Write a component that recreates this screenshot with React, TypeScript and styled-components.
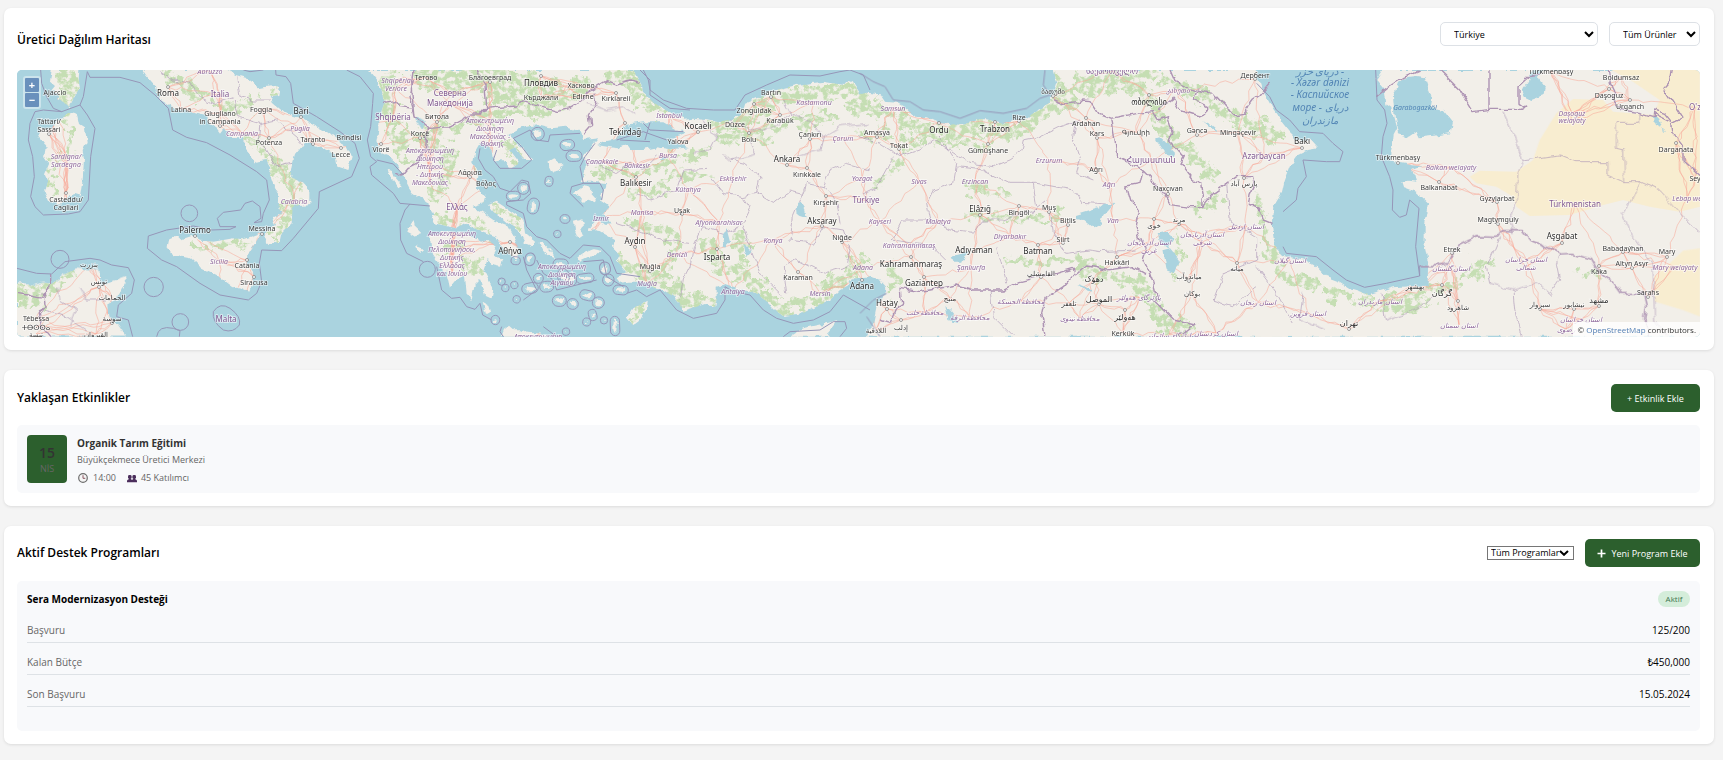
import React from "react";
import styled, { createGlobalStyle } from "styled-components";

const GlobalStyle = createGlobalStyle`
  * { box-sizing: border-box; }
  body {
    margin: 0;
    background: #f4f4f4;
    color: #000;
    font-family: "Open Sans", "Noto Sans", sans-serif;
    font-size: 10px;
  }
  h3, h4, p, dl, dd { margin: 0; }
  button, select { font-family: inherit; }
`;

const Page = styled.main`
  display: flex;
  flex-direction: column;
  gap: 20px;
  padding: 8px 9px 15px 4px;
`;

const Card = styled.section`
  background: #fff;
  border-radius: 7px;
  box-shadow: 0 1px 3px rgba(0, 0, 0, 0.1);
  padding: 13px 14px 13px 13px;
`;

const CardHeader = styled.header<{ $height: number; $gap: number; $align: string }>`
  display: flex;
  justify-content: space-between;
  align-items: ${(p) => p.$align};
  height: ${(p) => p.$height}px;
  margin-bottom: ${(p) => p.$gap}px;
`;

const CardTitle = styled.h3<{ $top?: number }>`
  font-size: 12px;
  line-height: 28px;
  font-weight: 600;
  padding-top: ${(p) => p.$top || 0}px;
`;

const Controls = styled.div`
  display: flex;
  align-items: center;
  gap: 11px;
`;

const FilterSelect = styled.select<{ $width: number }>`
  width: ${(p) => p.$width}px;
  height: 24px;
  margin-top: 1px;
  padding: 0 0 0 9px;
  border: 1px solid #dde1e6;
  border-radius: 5px;
  background: #fff;
  color: #000;
  font-size: 9px;
`;

const ProgramPicker = styled.div`
  position: relative;
  display: flex;
  width: 87px;
  height: 14px;
  svg {
    position: absolute;
    top: 4px;
    right: 5px;
    pointer-events: none;
  }
`;

const ProgramSelect = styled.select`
  appearance: none;
  width: 100%;
  padding: 0 0 0 3px;
  border: 1px solid #767676;
  border-radius: 0;
  background: #fff;
  color: #000;
  font-size: 9px;
  line-height: 12px;
`;

const ActionButton = styled.button<{ $width: number }>`
  display: flex;
  align-items: center;
  justify-content: center;
  gap: 5px;
  width: ${(p) => p.$width}px;
  height: 28px;
  padding: 0;
  border: 0;
  border-radius: 5px;
  background: #2c5f2d;
  color: #fff;
  font-size: 9px;
  white-space: nowrap;
`;

const MapFrame = styled.div`
  position: relative;
  height: 267px;
  border-radius: 5px;
  overflow: hidden;
  background: #aad3df;
`;

const MapSvg = styled.svg`
  display: block;
  width: 100%;
  height: 100%;
  font-family: "Noto Sans", "DejaVu Sans", sans-serif;
`;

const ZoomControls = styled.div`
  position: absolute;
  top: 6px;
  left: 6px;
  display: flex;
  flex-direction: column;
  gap: 1px;
  padding: 2px;
  border-radius: 3px;
  background: rgba(255, 255, 255, 0.4);
`;

const ZoomButton = styled.button`
  width: 14px;
  height: 14px;
  padding: 0;
  border: 0;
  border-radius: 1px;
  background: #6990bc;
  color: #fff;
  font-size: 11px;
  line-height: 14px;
  font-weight: 700;
`;

const Attribution = styled.div`
  position: absolute;
  right: 0;
  bottom: 0;
  padding: 0 4px;
  background: rgba(255, 255, 255, 0.8);
  color: #333;
  font-size: 8px;
  line-height: 15px;
  a { color: #5580b5; text-decoration: none; }
`;

const EventItem = styled.article`
  display: flex;
  align-items: flex-start;
  gap: 10px;
  padding: 10px 10px 7px;
  border-radius: 5px;
  background: #f8f9fb;
`;

const DateBox = styled.time`
  display: flex;
  flex-direction: column;
  align-items: center;
  width: 40px;
  height: 48px;
  padding-top: 9px;
  border-radius: 4px;
  background: #2c5f2d;
`;

const Day = styled.span`
  color: #333;
  font-size: 14px;
  line-height: 18px;
  font-weight: 600;
`;

const Month = styled.span`
  color: #666;
  font-size: 9px;
  line-height: 14px;
`;

const EventTitle = styled.h4`
  color: #333;
  font-size: 10px;
  line-height: 16px;
  font-weight: 700;
`;

const EventPlace = styled.p`
  color: #666;
  font-size: 9px;
  line-height: 18px;
`;

const EventMeta = styled.div`
  display: flex;
  gap: 11px;
  color: #666;
  font-size: 9px;
  line-height: 17px;
`;

const MetaEntry = styled.span`
  display: flex;
  align-items: center;
  gap: 4px;
`;

const Program = styled.article`
  padding: 10px 10px 24px;
  border-radius: 5px;
  background: #f8f9fb;
`;

const ProgramHeader = styled.header`
  display: flex;
  justify-content: space-between;
  height: 20px;
`;

const ProgramTitle = styled.h4`
  font-size: 10px;
  line-height: 16px;
  font-weight: 700;
`;

const Badge = styled.span`
  width: 32px;
  height: 16px;
  border-radius: 8px;
  background: #d4edda;
  color: #3f7550;
  font-size: 8px;
  line-height: 16px;
  text-align: center;
`;

const DetailRow = styled.div`
  display: flex;
  justify-content: space-between;
  height: 32px;
  padding-top: 10px;
  border-bottom: 1px solid #dee2e6;
  font-size: 10px;
  line-height: 18px;
  dt { color: #666; }
`;

/* ---------- map ---------- */

/* Each sheet uses three units per pixel, from its own origin. */
const sheets = {
  W: [0, 0],
  G: [350, 60],
  A: [430, 60],
  C: [860, 60],
  E: [1283, 0],
} as const;
type Sheet = keyof typeof sheets;
const place = (s: Sheet) => `translate(${sheets[s][0]} ${sheets[s][1]}) scale(0.33333)`;

type Shape = [Sheet, string];

const land: Shape[] = [
  ["W", "M155 210L238 210L236 240L240 262L222 290L206 322L190 305L172 298L175 285L155 270L165 258L150 245Z"],
  ["W", "M205 338L222 342L235 350L240 375L255 385L260 425L248 450L252 480L248 540L240 590L222 585L205 590L180 618L160 598L145 605L134 580L145 540L135 520L148 490L135 470L140 440L118 410L120 385L150 390L165 370Z"],
  ["W", "M428 210L440 228L455 245L470 262L482 300L530 330L552 328L580 338L625 350L632 372L650 385L660 398L670 385L690 400L678 410L720 412L735 430L735 450L765 485L800 480L812 500L808 520L822 560L840 585L835 625L845 640L815 655L825 675L795 700L798 728L835 730L840 705L875 670L878 620L900 615L928 612L928 570L905 545L870 530L875 500L885 465L905 440L915 425L935 430L960 440L1005 460L1012 500L1042 510L1055 470L1040 440L980 395L905 355L855 340L815 305L810 288L838 285L842 262L815 255L780 262L745 235L710 225L683 210Z"],
  ["W", "M503 740L508 715L532 705L545 718L575 708L600 722L640 725L700 715L725 718L745 712L784 697L768 725L742 765L740 790L765 830L748 875L720 862L700 865L680 850L650 825L600 800L570 772L550 768L515 765Z"],
  ["W", "M51 850L80 850L100 855L130 848L155 852L190 825L225 808L265 812L280 805L300 815L300 850L325 850L350 838L375 828L378 845L350 890L322 915L325 950L355 975L378 1010L51 1010Z"],
  ["G", "M58 30L82 60L95 90L102 130L88 180L88 210L82 245L95 280L120 290L140 310L165 355L180 385L190 400L215 418L235 425L240 450L255 490L320 505L345 488L360 500L400 515L440 530L455 560L500 600L510 575L490 530L470 495L430 480L395 455L365 440L400 430L405 410L380 380L385 345L370 310L375 280L395 245L425 270L430 305L460 300L480 325L510 310L480 270L495 262L525 300L550 300L520 265L500 250L475 225L510 205L560 195L600 205L650 200L690 215L700 240L745 235L720 265L735 262L760 245L800 237L825 195L880 187L940 187L990 215L1000 170L940 148L915 130L880 100L872 70L850 30Z"],
  ["G", "M240 530L270 515L300 515L350 520L390 545L415 540L440 560L430 580L455 600L450 620L425 615L410 600L400 630L430 690L425 715L405 705L390 660L370 680L362 720L350 700L345 650L320 660L300 685L290 640L265 610L245 580Z"],
  ["G", "M415 435L440 425L470 445L500 465L520 480L525 520L555 545L550 560L525 550L505 510L470 490L430 455Z"],
  ["G", "M110 330L125 332L130 345L155 375L145 382L130 360L118 350Z"],
  ["G", "M180 495L190 480L195 500L210 515L198 530L185 522L172 515Z"],
  ["G", "M195 555L210 560L222 572L208 580Z"],
  ["G", "M592 308L610 298L625 310L640 310L630 330L605 335Z"],
  ["G", "M665 402L685 390L705 376L722 390L742 412L735 430L715 422L700 425L690 412Z"],
  ["G", "M672 482L700 475L705 490L690 505L698 525L685 535L675 510Z"],
  ["G", "M567 545L580 548L605 575L612 592L595 585L580 570Z"],
  ["G", "M685 590L700 580L730 568L755 572L740 588L715 590L690 602Z"],
  ["G", "M832 775L850 745L890 722L888 750L870 780L850 795Z"],
  ["G", "M455 830L462 812L480 797L492 808L515 808L530 818L590 822L600 830Z"],
  ["G", "M398 728L415 738L420 755L408 762Z"],
  ["A", "M752 180L790 176L830 180L860 186L905 178L935 165L945 130L980 115L1040 90L1100 75L1180 65L1240 75L1265 60L1290 100L1330 115L1330 650L1290 655L1265 655L1250 680L1230 690L1200 720L1170 735L1120 760L1060 768L1035 750L1010 725L980 700L940 690L885 672L860 680L860 715L855 740L825 732L800 740L760 752L745 730L730 710L700 690L680 690L650 665L600 665L570 668L560 655L590 635L560 600L568 585L545 560L555 540L520 520L500 508L475 510L490 490L500 480L525 492L545 490L520 460L540 440L510 420L525 390L530 370L490 365L455 365L470 320L460 290L475 270L500 255L560 265L590 255L600 270L640 270L680 262L720 268L780 262L740 250L720 235L770 218L745 200Z"],
  ["A", "M1080 830L1120 805L1190 790L1225 780L1190 820L1200 830Z"],
  ["C", "M-10 105L20 98L60 103L75 125L110 128L140 145L165 170L200 172L240 190L310 195L350 178L380 178L420 190L490 180L520 160L550 145L580 110L592 70L580 30L1190 30L1200 75L1330 75L1330 830L20 830L40 790L50 740L80 700L78 680L60 660L35 650L-10 655Z"],
  ["E", "M-80 210H1260V1010H-80Z"],
];

const islands: [Sheet, number, number, number, number][] = [
  ["G", 563, 222, 11, 11], ["G", 652, 255, 13, 7], ["G", 672, 288, 15, 7], ["G", 597, 364, 3, 6],
  ["G", 550, 438, 8, 15], ["G", 520, 385, 8, 9], ["G", 490, 408, 12, 5], ["G", 645, 477, 6, 4],
  ["G", 540, 598, 6, 10], ["G", 540, 685, 16, 7], ["G", 590, 680, 12, 7], ["G", 632, 612, 14, 6],
  ["G", 655, 660, 16, 7], ["G", 640, 648, 9, 12], ["G", 705, 655, 18, 5], ["G", 628, 722, 12, 8],
  ["G", 668, 732, 8, 7], ["G", 712, 706, 14, 6], ["G", 745, 728, 9, 8], ["G", 795, 798, 5, 20],
  ["G", 812, 690, 14, 5], ["G", 775, 660, 8, 9], ["G", 765, 625, 7, 10], ["G", 565, 655, 6, 6],
  ["G", 455, 665, 2, 2], ["G", 466, 684, 2, 2], ["G", 493, 675, 2, 2], ["G", 622, 522, 2, 2],
  ["G", 762, 781, 2, 2], ["G", 710, 786, 3, 3], ["G", 728, 765, 3, 8], ["G", 648, 815, 2, 2],
  ["G", 436, 780, 4, 5], ["G", 497, 602, 5, 3], ["G", 500, 718, 2, 2],
];

/* Lone rocks: the limit around them is a wide circle. */
const rocks: [Sheet, number, number, number][] = [
  ["W", 180, 778, 27], ["W", 568, 640, 25], ["W", 461, 861, 29], ["W", 541, 966, 25], ["G", 232, 628, 24],
];

const water: Shape[] = [
  ["E", "M-82 210L-69 255L-29 330L1 372L20 395L45 420L85 422L105 445L75 450L45 465L20 500L5 540L-4 580L-29 620L-34 670L-24 740L0 768L60 778L95 795L130 830L170 845L200 865L260 882L330 862L400 858L437 857L438 800L425 740L425 680L438 610L400 575L360 560L355 545L375 542L400 545L390 510L415 500L355 490L328 485L322 460L330 430L332 400L340 385L330 350L325 320L310 310L305 270L280 240L300 210Z"],
  ["E", "M330 290L345 245L370 232L400 228L425 232L445 290L440 320L480 330L508 365L500 400L470 405L410 412L402 395L380 410L345 400L335 350Z"],
  ["E", "M745 210L735 240L715 265L725 290L745 300L785 285L788 260L765 230L780 210Z"],
  ["C", "M648 465L690 452L715 445L735 428L760 432L730 465L722 495L700 505L670 480L648 478Z"],
  ["C", "M885 238L905 235L945 275L942 288L915 280Z"],
  ["C", "M893 520L925 512L940 540L925 565L900 545Z"],
  ["C", "M910 570L930 565L960 600L945 640L920 630Z"],
  ["C", "M1025 180L1050 192L1078 215L1055 205Z"],
  ["C", "M272 590L310 580L330 575L300 605L278 605Z"],
  ["C", "M256 735L270 750L290 775L298 790L265 780Z"],
  ["C", "M655 672L690 685L700 695L680 692Z"],
  ["A", "M1098 440L1115 420L1125 450L1130 475L1100 465Z"],
  ["A", "M878 525L890 508L900 545L885 560Z"],
  ["A", "M940 550L965 575L950 592Z"],
  ["A", "M690 295L705 290L710 298L695 300Z"],
  ["G", "M195 170L225 188L222 205L200 190Z"],
  ["E", "M1112 350L1125 352L1135 380L1122 375ZM1140 380L1148 395L1142 400Z"],
];

const deserts: Shape[] = [
  ["E", "M985 210H1251V620L1190 635L1100 620L1020 600L960 615L860 645L740 648L700 620L690 590L640 560L580 550L560 530L590 512L700 515L750 480L770 420L820 340L870 297L960 300L990 335L1110 345L1130 300L1050 245Z"],
  ["E", "M1115 830L1160 790L1200 752L1251 745V950L1200 930L1115 905Z"],
];

/* Woodland belts, as broad lines: sheet, path, width. */
const woods: [Sheet, string, number][] = [
  ["W", "M195 215L205 250L200 295", 50], ["W", "M160 580L150 500L215 440L200 360", 12], ["W", "M500 215L560 265L620 300L700 330L760 300", 22],
  ["W", "M760 420L820 480L835 520L880 560", 30], ["W", "M890 570L870 640L825 710", 28], ["W", "M590 745L680 730L745 725", 14],
  ["W", "M55 890L110 880L150 850L215 825", 34], ["W", "M60 905L120 900", 26], ["W", "M820 275L835 272", 18],
  ["G", "M120 40L110 140L140 230L170 300", 34], ["G", "M230 50L330 60L420 50L520 70L640 110", 58], ["G", "M420 100L500 120L630 120L690 70", 34],
  ["G", "M210 230L290 270L300 340L250 400", 32], ["G", "M230 210L320 200L440 160L590 160", 26], ["G", "M800 40L880 60L900 130", 50],
  ["G", "M430 440L500 490", 18], ["G", "M290 560L340 590L380 630", 24], ["G", "M270 470L340 480L420 520", 18], ["G", "M470 250L490 300", 18],
  ["G", "M385 300L400 380", 14], ["G", "M840 780L880 745", 14],
  ["A", "M560 50L620 60L640 110L700 150", 36], ["A", "M840 190L920 195L960 160L1060 110L1160 100L1260 85L1310 120", 38], ["A", "M880 240L1000 220L1090 180L1200 170", 24],
  ["A", "M490 330L560 330L640 340L720 300L830 280", 24], ["A", "M600 400L680 400L740 340L840 350", 16], ["A", "M600 500L700 500L740 560L700 640", 22],
  ["A", "M560 600L640 650L720 680L770 735L850 720", 30], ["A", "M830 550L860 620L940 640L1000 700L1060 750L1160 720L1240 650L1300 590", 30], ["A", "M930 530L940 600", 26],
  ["C", "M-10 140L60 160L170 200L240 215L340 205L430 215L500 195L560 140L630 120", 38], ["C", "M0 210L80 240L200 240L380 260", 16], ["C", "M590 80L700 80L800 70L860 50", 36],
  ["C", "M640 60L780 50L850 90L900 160L910 220", 24], ["C", "M920 60L1000 90L1060 130L1140 180L1250 230", 34], ["C", "M940 230L1000 290L1050 340", 30],
  ["C", "M1030 440L1080 420", 26], ["C", "M1195 420L1215 500L1240 600L1290 650L1320 660", 24], ["C", "M340 380L430 400", 24], ["C", "M100 690L95 640", 24],
  ["C", "M20 600L-10 620", 28], ["C", "M330 460L480 480L600 470", 16], ["C", "M440 600L540 610L650 590L700 620", 16],
  ["C", "M680 630L760 650L850 680L880 740L920 800L990 800", 32], ["C", "M40 380L70 360L150 270", 14], ["C", "M940 530L960 580L940 640", 12],
  ["E", "M0 835L60 840L120 870L200 895L290 915L360 905L430 880L520 850L605 790", 24], ["E", "M310 910L380 920", 42], ["E", "M890 820L940 835", 14],
];

/* Country frontiers. */
const frontiers: Shape[] = [
  ["G", "M102 130L135 125L150 140L190 145L195 170L185 60L190 30"],
  ["G", "M190 145L180 110L190 60M195 170L225 195L235 205L300 200L365 165L392 165L395 150L410 145L405 75L380 30"],
  ["G", "M235 205L230 260L210 280L205 310L175 325L155 348L135 335"],
  ["G", "M395 146L500 138L520 125L620 155L660 145L700 120L715 95L770 62L800 72L840 60L872 68"],
  ["G", "M735 95L740 130L718 165L722 195L700 220"],
  ["C", "M580 120L610 132L660 128L665 120L690 122L715 160L755 175L830 160L880 155L895 180L920 170L935 220L925 240L970 290L960 310L1000 360L1025 370L1030 410L1028 440L990 440L930 430L910 400L870 350L850 330L835 320L770 290L765 240L755 175"],
  ["C", "M895 150L940 115L960 150L1020 168L1040 160L1040 140L1000 120L1010 95L945 65L930 30"],
  ["C", "M1010 90L1060 100L1120 165L1150 160L1180 120L1195 110L1230 70"],
  ["C", "M850 330L840 370L800 378L815 430L835 460L825 500L840 540L860 570L850 600L870 640L885 690L890 730L920 760L940 780L1005 795L960 830"],
  ["C", "M1028 440L1060 400L1130 350L1180 350L1185 370L1170 400L1165 435L1200 450L1210 480L1235 490"],
  ["C", "M855 640L820 620L740 630L680 618L645 645L640 625L590 640L540 650L480 665L430 690L340 690L290 675L210 690L180 695L120 685L125 730L110 740L90 790L60 780"],
  ["C", "M645 640L610 680L555 715L545 760L555 830"],
  ["E", "M470 210L530 270L570 335L618 328H715L725 322L708 310V260L740 230L770 225"],
  ["E", "M618 210V328M980 210L985 250L995 270L990 300L1015 330L1070 338L1110 350L1115 330L1145 340L1165 365L1170 400L1200 440L1200 480L1250 525"],
  ["E", "M410 797H450L495 790L510 765L530 735L580 710L640 712L655 692L720 692L745 722L800 745L830 762L870 760L925 778L940 805L990 845L1015 880L1080 880L1090 920L1085 960L1100 1010"],
  ["E", "M280 290L320 258L360 232L410 210"],
  ["E", "M1165 210L1160 240L1140 262L1200 355L1170 370L1110 340"],
  ["W", "M155 822L155 852L130 880L135 915L115 940L125 980L150 1010"],
  ["W", "M51 880L80 885L130 895"],
];

/* Inner province limits. */
const provinces: Shape[] = [
  ["W", "M520 240L570 250L600 290L640 310L700 290M710 230L720 290L760 300L810 300M700 300L710 350L780 370L830 360L890 410L905 440M780 370L775 420L800 450L830 500L870 490M480 215L530 250"],
  ["W", "M175 860L180 900L230 930L210 980M240 860L260 900L330 900M130 930L200 950L260 990"],
  ["A", "M470 130L530 150L580 140L610 160M820 180L860 230L840 270L790 280M900 180L960 210L1040 200L1080 160L1060 120M960 240L980 280L900 300L880 280M1080 160L1150 190L1180 230L1170 270L1100 290M1180 230L1230 200L1320 190"],
  ["A", "M470 300L560 340L600 310L640 330L680 290M620 400L660 420L740 390L760 330L830 325M840 350L880 400L940 410L980 400L990 350L940 310L900 300M940 410L960 440L930 500L880 520L820 500L790 560L780 620L760 660L750 720"],
  ["A", "M560 490L620 510L700 540L780 550M980 400L1030 430L1080 390L1120 400L1130 370L1180 380L1200 330L1250 310L1320 330M1120 400L1090 470L1080 540L1150 550L1180 500L1240 510L1260 570L1250 620L1180 640L1100 600L1060 620L1070 700M1180 380L1220 420L1230 490M940 500L960 560L990 640L1060 710"],
  ["C", "M0 230L60 250L120 290L180 270L220 240L270 270L330 310L400 320L450 300L480 280L490 240L540 230L600 200L660 180M240 230L290 310L280 370L220 390L200 430L210 480L270 510L340 520L370 480L430 480L520 450L560 420M650 180L640 240L660 300L650 340L700 360"],
  ["C", "M290 320L370 330L450 370L530 370L640 390L670 430L740 435M520 370L530 440L500 480M570 450L580 520L620 580L690 570L720 575L830 570M100 290L50 380L10 400M200 480L130 480L100 540L220 560L260 600M410 560L440 670M390 690L400 770L460 830M1100 370L1110 480L1190 530L1190 600L1090 640L1060 720L1120 740L1190 680M1190 620L1250 700L1300 790"],
  ["E", "M660 335L690 400L720 480L705 520L700 600L680 660L690 700M720 480L830 465L880 485H975V525L1020 545H1070L1130 570L1200 650L1250 700M1000 370H1070V340M1000 370V445L1022 450L1025 545M1070 545L1045 600L1020 640L1050 710L1110 800L1115 960L1150 1010"],
  ["E", "M650 712L625 770L610 800L620 850L690 870L760 850L800 885L830 840L820 790L830 762M690 870L695 930L715 1010M300 880L310 960L420 920L450 890M60 880L50 960L130 990"],
];

/* Limits of the territorial waters. */
const seaLimits: Shape[] = [
  ["W", "M122 210L125 250L140 290L160 325L185 335L240 315L262 345L285 385L272 470L265 600L240 635L205 642L130 645L105 620L92 590L103 530L98 470L85 420L90 370L105 335L130 330L185 335M240 315L250 290L262 215L270 232H360L420 248L465 285L505 325L518 390L560 412L620 428L690 465L770 515L800 540L808 600L790 640L785 665L762 668L783 655L780 620L757 603L735 610L722 630L670 637L652 655L660 680L708 680L690 688L635 690L580 678L500 690L445 708L442 745L485 780L530 800L600 850L660 885L745 900L770 880L785 845L778 790L785 750L845 752L880 715L955 625L958 575L1055 530L1078 475L1065 430L1020 395L950 350L880 310L872 250L858 230L828 225L827 210"],
  ["W", "M51 805L110 820L155 822L195 785L270 775L300 780L335 795L385 803L403 840L395 880L355 915L350 950L385 960L398 1010M470 1010Q475 975 520 985L540 992L538 1010M730 210L750 215L790 210M640 935Q660 905 690 925Q725 950 718 975Q700 1000 670 990Q635 965 640 935"],
  ["G", "M-10 30L30 50L70 100L68 130L62 200L52 240L62 290L80 305L60 320L65 345L130 400L150 430L240 438M80 300L130 312L160 345M180 432L165 450L150 490L152 540L170 580L220 605M260 620L275 690L305 715L330 712L350 740L375 748L390 730L398 765L425 780M455 800L450 815L460 830M580 800L620 830"],
  ["G", "M390 265L385 295L405 330L430 350L450 385L480 395L515 360L535 365L542 400L520 420L470 425L470 435L520 460L530 500L560 530L590 540L630 580L660 595L700 555L750 560L780 590L800 640L870 650M440 270L430 300L450 325L515 325L545 300L515 260L490 235L540 210L560 240L595 245L600 225L690 220M735 250L705 290L690 320L700 370L750 370L760 390L755 420M660 400L665 380L700 370M700 440L660 400M520 590L530 630L560 690L520 720M560 600L580 640L610 660L620 690L740 660M700 605L760 600L770 650L820 680"],
  ["G", "M925 0L870 30L900 60L900 105L960 145L1020 150M900 188L885 240M810 240L900 245"],
  ["A", "M640 30L655 60L660 90L700 120L770 145L850 150L915 150L945 105L1010 75L1080 45L1170 48L1230 35L1260 30L1300 45L1320 90M640 190L660 210L760 215M560 240L640 215L710 240"],
  ["A", "M590 700L620 690L650 710L690 690L740 750L790 775L860 760L885 720L885 680L910 695L960 705L1000 750L1040 775L1090 790L1150 780L1200 755L1240 705L1320 750M1060 830L1080 815L1170 810L1210 785L1245 785L1250 805L1230 830"],
  ["C", "M0 40L40 65L75 80L100 120L150 125L190 150L240 155L300 175L360 152L430 160L500 145L540 115L570 105L550 75L555 30M0 760L40 720L80 700M60 830L40 800L20 770"],
  ["E", "M-79 250L-40 290L-20 330L20 360L50 395L120 400L150 430L180 455L170 485L130 485L60 480L70 530L45 565L40 600L0 635M0 740L10 760L100 770L150 810L190 840L245 862L310 850L410 828L398 740L408 625L380 600L370 645L350 652L328 630L330 570L320 530L295 470L300 410L312 370L305 330L282 300L278 210M410 797V828"],
];

type Kind = "small" | "city" | "region" | "country" | "sea" | "gulf";
/* text, sheet, centre x, centre y, kind, offset of the town's dot */
type Label = [string, Sheet, number, number, Kind, number?];
const labels: Label[] = [
  ["Ajaccio", "W", 164, 276, "small"], ["Tàttari/", "W", 147, 362, "small"], ["Sassari", "W", 148, 386, "small", 16],
  ["Sardigna/", "W", 198, 468, "region"], ["Sardegna", "W", 198, 492, "region"], ["Casteddu/", "W", 198, 597, "small", -17], ["Cagliari", "W", 199, 621, "small"],
  ["Roma", "W", 505, 280, "city", -20], ["Latina", "W", 544, 326, "small"], ["Italia", "W", 660, 283, "country"], ["Abruzzo", "W", 630, 213, "region"],
  ["Giugliano", "W", 661, 338, "small"], ["in Campania", "W", 661, 362, "small", 16], ["Foggia", "W", 784, 328, "small"], ["Bari", "W", 904, 334, "city", 18],
  ["Puglia", "W", 900, 383, "region"], ["Campania", "W", 727, 398, "region"], ["Potenza", "W", 807, 427, "small", -14], ["Taranto", "W", 938, 416, "small", 16],
  ["Brindisi", "W", 1046, 412, "small"], ["Lecce", "W", 1023, 461, "small", -16], ["Calabria", "W", 882, 602, "region"], ["Messina", "W", 785, 685, "small", 16],
  ["Palermo", "W", 584, 691, "city", 17], ["Sicilia", "W", 656, 783, "region"], ["Catania", "W", 742, 796, "small", -17], ["Siracusa", "W", 761, 846, "small", -16],
  ["Malta", "W", 679, 958, "country"], ["بنزرت", "W", 268, 793, "small"], ["تونس", "W", 297, 842, "small", 18], ["الحمامات", "W", 336, 890, "small"],
  ["سوسة", "W", 337, 954, "small", 16], ["Tébessa", "W", 108, 954, "small"], ["ⵜⴱⵙⵙⴰ", "W", 108, 980, "small"], ["تبسة", "W", 108, 1003, "small"], ["القيروان", "W", 288, 1003, "small"],
  ["Shqipëria", "G", 138, 60, "region"], ["Veriore", "G", 138, 84, "region"], ["Тетово", "G", 228, 50, "small"], ["Северна", "G", 299, 99, "country"], ["Македонија", "G", 299, 129, "country"],
  ["Shqipëria", "G", 129, 170, "country"], ["Битола", "G", 261, 169, "small", 16], ["Korçë", "G", 211, 219, "small", 16], ["Vlorë", "G", 93, 268, "small", -16],
  ["Αποκεντρωμένη", "G", 241, 269, "region"], ["Διοίκηση", "G", 241, 293, "region"], ["Ηπείρου", "G", 241, 317, "region"], ["- Δυτικής", "G", 241, 341, "region"], ["Μακεδονίας", "G", 241, 365, "region"],
  ["Благоевград", "G", 421, 50, "small", 16], ["Пловдив", "G", 572, 68, "city", -20], ["Хасково", "G", 692, 74, "small"], ["Кърджали", "G", 572, 110, "small"], ["Edirne", "G", 698, 107, "small"],
  ["Kırklareli", "G", 797, 114, "small", -16], ["Αποκεντρωμένη", "G", 420, 179, "region"], ["Διοίκηση", "G", 420, 203, "region"], ["Μακεδονίας -", "G", 420, 227, "region"], ["Θράκης", "G", 425, 250, "region"],
  ["Λάρισα", "G", 359, 336, "small", 14], ["Βόλος", "G", 407, 368, "small", 14], ["Ελλάς", "G", 320, 441, "country"], ["Αθήνα", "G", 480, 573, "city", -28],
  ["Αποκεντρωμένη", "G", 306, 520, "region"], ["Διοίκηση", "G", 306, 544, "region"], ["Πελοποννήσου,", "G", 306, 568, "region"], ["Δυτικής", "G", 306, 592, "region"], ["Ελλάδας", "G", 306, 615, "region"], ["και Ιονίου", "G", 306, 639, "region"],
  ["Αποκεντρωμένη", "G", 636, 617, "region"], ["Διοίκηση", "G", 636, 641, "region"], ["Αιγαίου", "G", 636, 665, "region"], ["Αποκεντρωμένη", "G", 563, 828, "region"],
  ["Tekirdağ", "A", 584, 216, "city", -26], ["İstanbul", "A", 716, 164, "region"], ["Kocaeli", "A", 805, 199, "city", 17], ["Yalova", "A", 743, 244, "small"], ["Bursa", "A", 714, 286, "region"],
  ["Çanakkale", "A", 517, 302, "region"], ["Balıkesir", "A", 620, 316, "region"], ["Balıkesir", "A", 618, 368, "city", -17], ["Düzce", "A", 916, 192, "small"], ["Bolu", "A", 957, 236, "small", -16],
  ["Zonguldak", "A", 973, 149, "small", -16], ["Bartın", "A", 1023, 96, "small", 14], ["Karabük", "A", 1049, 180, "small", -14], ["Kastamonu", "A", 1153, 126, "region"], ["Çankırı", "A", 1141, 221, "small", 16],
  ["Çorum", "A", 1240, 234, "region"], ["Ankara", "A", 1070, 298, "city", 18], ["Kırıkkale", "A", 1130, 341, "small", -16], ["Eskişehir", "A", 908, 355, "region"], ["Kütahya", "A", 774, 388, "region"],
  ["Manisa", "A", 637, 456, "region"], ["Uşak", "A", 756, 449, "small", 12], ["İzmir", "A", 514, 474, "region"], ["Afyonkarahisar", "A", 868, 485, "region"], ["Yozgat", "A", 1297, 353, "region"],
  ["Kırşehir", "A", 1189, 425, "small", -16], ["Türkiye", "A", 1308, 421, "country"], ["Aksaray", "A", 1177, 482, "city", 15], ["Niğde", "A", 1236, 531, "small", 14], ["Konya", "A", 1029, 539, "region"],
  ["Aydın", "A", 614, 542, "city", 18], ["Denizli", "A", 742, 581, "region"], ["Muğla", "A", 661, 618, "small", 14], ["Isparta", "A", 860, 590, "city", -22], ["Muğla", "A", 651, 669, "region"],
  ["Karaman", "A", 1103, 652, "small", -16], ["Antalya", "A", 908, 694, "region"], ["Mersin", "A", 1169, 700, "region"], ["Adana", "A", 1300, 620, "region"], ["Adana", "A", 1295, 679, "city", -20],
  ["Samsun", "C", 98, 143, "region"], ["Amasya", "C", 52, 215, "small", 15], ["Tokat", "C", 117, 254, "small", 14], ["Ordu", "C", 238, 210, "city", -20], ["Trabzon", "C", 406, 207, "city", -20], ["Rize", "C", 478, 170, "small", 14],
  ["Gümüşhane", "C", 384, 269, "small", -16], ["Erzurum", "C", 567, 300, "region"], ["Erzincan", "C", 345, 362, "region"], ["Sivas", "C", 177, 363, "region"], ["Elâzığ", "C", 360, 446, "city", 18],
  ["Bingöl", "C", 476, 455, "small", -16], ["Muş", "C", 567, 442, "small", 15], ["Bitlis", "C", 623, 481, "small", 14], ["Malatya", "C", 235, 483, "region"], ["Kayseri", "C", 59, 484, "region"],
  ["Kahramanmaraş", "C", 148, 554, "region"], ["Adıyaman", "C", 341, 571, "city"], ["Diyarbakır", "C", 450, 529, "region"], ["Batman", "C", 534, 574, "city", -20], ["Siirt", "C", 608, 536, "small", 14], ["Van", "C", 759, 479, "region"],
  ["Kahramanmaraş", "C", 152, 611, "city", -20], ["Şanlıurfa", "C", 332, 620, "region"], ["Gaziantep", "C", 193, 670, "city", -20], ["Hatay", "C", 81, 730, "city", 17], ["Hakkâri", "C", 772, 607, "small", -16],
  ["Ağrı", "C", 708, 326, "small"], ["Ağrı", "C", 747, 373, "region"], ["Kars", "C", 712, 220, "small", 14], ["Ardahan", "C", 677, 190, "small", -16], ["ბათუმი", "C", 580, 94, "small", 14],
  ["საქართველო", "C", 755, 33, "country"], ["თბილისი", "C", 868, 126, "city", -22], ["კახეთი", "C", 953, 89, "region"], ["Գյումրի", "C", 827, 215, "small"], ["Հայաստան", "C", 872, 301, "country"],
  ["Naxçıvan", "C", 924, 385, "small", 16], ["Gəncə", "C", 1010, 211, "small", 14], ["Mingəçevir", "C", 1133, 217, "small"], ["Azərbaycan", "C", 1211, 288, "country"], ["Дербент", "C", 1186, 44, "small", 14],
  ["پارس آباد", "C", 1152, 370, "small", -16], ["خوی", "C", 881, 494, "small", -16], ["مرند", "C", 956, 478, "small", 14], ["استان آذربایجان", "C", 1027, 521, "region"], ["شرقی", "C", 1027, 546, "region"],
  ["استان آذربایجان", "C", 868, 545, "region"], ["غربی", "C", 868, 570, "region"], ["استان اردبیل", "C", 1158, 498, "region"], ["میانه", "C", 1132, 625, "small", -16], ["میاندوآب", "C", 987, 648, "small", 14],
  ["بوکان", "C", 996, 699, "small"], ["استان زنجان", "C", 1194, 725, "region"], ["استان کردستان", "C", 1068, 818, "region"], ["دهۆک", "C", 703, 658, "city"], ["الموصل", "C", 716, 716, "city", 17],
  ["تلعفر", "C", 626, 730, "small"], ["محافظة نينوى", "C", 659, 774, "region"], ["هەولێر", "C", 796, 772, "city", -22], ["Kerkük", "C", 790, 819, "small"], ["پارێزگای هەولێر", "C", 838, 712, "region"], ["پارێزگای سلێمانی", "C", 926, 826, "region"],
  ["القامشلي", "C", 543, 639, "small", 12], ["محافظة الحسكة", "C", 484, 722, "region"], ["منبج", "C", 270, 713, "small"], ["محافظة حلب", "C", 194, 755, "region"], ["محافظة الرقة", "C", 329, 770, "region"], ["إدلب", "C", 124, 802, "small", -22], ["اللاذقية", "C", 47, 809, "small"],
  ["دریای خزر -", "E", 110, 216, "sea"], ["- Xəzər dənizi", "E", 110, 248, "sea"], ["- Каспийское", "E", 110, 286, "sea"], ["море - دریای", "E", 110, 324, "sea"], ["مازندران", "E", 110, 362, "sea"],
  ["Bakı", "E", 58, 423, "city", 20], ["Garabogazköl", "E", 396, 321, "gulf"], ["Türkmenbaşy", "E", 345, 472, "small", 16], ["Balkan welaýaty", "E", 505, 502, "region"], ["Balkanabat", "E", 469, 562, "small", -16],
  ["Gyzylarbat", "E", 643, 593, "small", 14], ["Magtymguly", "E", 646, 657, "small", 15], ["Etrek", "E", 507, 746, "small", 14], ["Türkmenistan", "E", 876, 611, "country"], ["Aşgabat", "E", 836, 709, "city", 20],
  ["Daşoguz", "E", 866, 338, "region"], ["welaýaty", "E", 866, 361, "region"], ["Daşoguz", "E", 979, 284, "small", -18], ["Boldumsaz", "E", 1013, 231, "small"], ["Türkmenbaşy", "E", 804, 213, "small"], ["Urganch", "E", 1041, 317, "small", -16],
  ["Darganata", "E", 1180, 446, "small", -16], ["O'z", "E", 1236, 322, "country"], ["Sey", "E", 1236, 535, "small"], ["Lebap we", "E", 1212, 595, "region"], ["Babadaýhan", "E", 1019, 743, "small", 14], ["Mary", "E", 1151, 754, "small", 16],
  ["Altyn Asyr", "E", 1047, 790, "small", 14], ["Mary welaýaty", "E", 1176, 800, "region"], ["Kaka", "E", 948, 813, "small", -16], ["Sarahs", "E", 1094, 876, "small", 14], ["استان خراسان", "E", 728, 777, "region"], ["شمالی", "E", 728, 801, "region"],
  ["استان گلستان", "E", 504, 803, "region"], ["بهشهر", "E", 396, 859, "small"], ["گرگان", "E", 476, 878, "city", -22], ["شاهرود", "E", 525, 920, "small", -18], ["استان مازندران", "E", 291, 902, "region"], ["استان قزوین", "E", 76, 940, "region"],
  ["استان گیلان", "E", 20, 781, "region"], ["تهران", "E", 199, 968, "city", 18], ["استان سمنان", "E", 527, 976, "region"], ["سبزوار", "E", 772, 913, "small", 14], ["نیشابور", "E", 873, 912, "small", 14], ["مشهد", "E", 948, 901, "city", 16],
  ["استان خراسان", "E", 895, 958, "region"], ["رضوی", "E", 850, 986, "region"],
];

const kinds: Record<Kind, { size: number; fill: string; italic?: boolean }> = {
  small: { size: 7, fill: "#3a3a3a" },
  city: { size: 8, fill: "#2a2a2a" },
  region: { size: 7, fill: "#8f6a9e", italic: true },
  country: { size: 8, fill: "#7f5790" },
  sea: { size: 10, fill: "#5285b5", italic: true },
  gulf: { size: 7, fill: "#5285b5", italic: true },
};

const toMap = (s: Sheet, x: number, y: number): [number, number] => [
  Math.round(sheets[s][0] + x / 3),
  Math.round(sheets[s][1] + y / 3),
];

/* Winding roads that link each town with its neighbours. */
const roads = (() => {
  const towns = labels
    .filter((l) => l[4] !== "sea" && l[4] !== "gulf")
    .map((l) => toMap(l[1], l[2], l[3] + (l[5] || 0)));
  let seed = 7;
  const rnd = () => {
    seed = (seed * 16807) % 2147483647;
    return seed / 2147483647 - 0.5;
  };
  const out: string[] = [];
  towns.forEach(([x, y], i) => {
    const near = towns
      .map((t, j) => ({ t, j, d: Math.hypot(t[0] - x, t[1] - y) }))
      .filter((n) => n.j !== i && n.d > 16 && n.d < 90)
      .sort((a, b) => a.d - b.d)
      .slice(0, 3);
    near.forEach(({ t, d }) => {
      let path = `M${x} ${y}`;
      const steps = Math.max(3, Math.round(d / 7));
      for (let k = 1; k < steps; k++) {
        const px = x + ((t[0] - x) * k) / steps + rnd() * 5;
        const py = y + ((t[1] - y) * k) / steps + rnd() * 5;
        path += `L${px.toFixed(1)} ${py.toFixed(1)}`;
      }
      out.push(`${path}L${t[0]} ${t[1]}`);
    });
  });
  return out;
})();

const Shapes = ({ list }: { list: Shape[] }) => (
  <>
    {list.map(([s, d], i) => (
      <path key={i} d={d} transform={place(s)} vectorEffect="non-scaling-stroke" />
    ))}
  </>
);

const TerrainMap = () => (
  <MapSvg viewBox="17 70 1683 267" preserveAspectRatio="xMidYMid slice" role="img" aria-label="Üretici dağılım haritası">
    <defs>
      <filter id="rough" x="0" y="0" width="1723" height="360" filterUnits="userSpaceOnUse" colorInterpolationFilters="sRGB">
        <feTurbulence type="fractalNoise" baseFrequency="0.12" numOctaves={3} seed={4} result="n" />
        <feDisplacementMap in="SourceGraphic" in2="n" scale={6} xChannelSelector="R" yChannelSelector="G" />
      </filter>
      <filter id="lines" x="0" y="0" width="1723" height="360" filterUnits="userSpaceOnUse" colorInterpolationFilters="sRGB">
        <feTurbulence type="fractalNoise" baseFrequency="0.1" numOctaves={2} seed={9} result="n" />
        <feDisplacementMap in="SourceGraphic" in2="n" scale={7} xChannelSelector="R" yChannelSelector="G" />
      </filter>
      <filter id="woods" x="0" y="0" width="1723" height="360" filterUnits="userSpaceOnUse" colorInterpolationFilters="sRGB">
        <feTurbulence type="fractalNoise" baseFrequency="0.08" numOctaves={4} seed={12} result="n" />
        <feDisplacementMap in="SourceGraphic" in2="n" scale={26} xChannelSelector="R" yChannelSelector="G" result="d" />
        <feTurbulence type="fractalNoise" baseFrequency="0.18" numOctaves={4} seed={3} result="m" />
        <feColorMatrix in="m" type="matrix" values="0 0 0 0 0  0 0 0 0 0  0 0 0 0 0  0 5 0 0 -1.75" result="holes" />
        <feComposite in="d" in2="holes" operator="in" />
      </filter>
      <clipPath id="land">
        {land.map(([s, d], i) => (
          <path key={i} d={d} transform={place(s)} />
        ))}
      </clipPath>
    </defs>

    <rect x="0" y="60" width="1723" height="290" fill="#aad3df" />
    <g fill="#f2efe9" filter="url(#rough)">
      <Shapes list={land} />
      {islands.map(([s, x, y, rx, ry], i) => (
        <ellipse key={i} cx={x} cy={y} rx={rx} ry={ry} transform={place(s)} />
      ))}
    </g>
    <g clipPath="url(#land)">
      <g fill="#f8edd0"><Shapes list={deserts} /></g>
      <g fill="none" stroke="#c5deb3" strokeLinecap="round" strokeLinejoin="round" filter="url(#woods)">
        {woods.map(([s, d, w], i) => (
          <path key={i} d={d} transform={place(s)} strokeWidth={w * 1.3} />
        ))}
      </g>
      <g fill="none" stroke="#f7ab9b" strokeWidth="0.7" strokeOpacity="0.8" strokeLinejoin="round">
        {roads.map((d, i) => (
          <path key={i} d={d} />
        ))}
      </g>
      <g fill="none" stroke="#a892b4" strokeWidth="0.8" strokeOpacity="0.75" filter="url(#lines)"><Shapes list={provinces} /></g>
    </g>
    <g fill="#aad3df" filter="url(#rough)"><Shapes list={water} /></g>
    <g fill="none" stroke="#ad93b3" strokeWidth="1.4" strokeLinejoin="round" filter="url(#lines)"><Shapes list={frontiers} /></g>
    <g fill="none" stroke="#9696b8" strokeWidth="1" strokeLinejoin="round">
      <Shapes list={seaLimits} />
      {islands.map(([s, x, y, rx, ry], i) => (
        <rect key={i} x={x - rx - 9} y={y - ry - 9} width={rx * 2 + 18} height={ry * 2 + 18}
          rx={Math.min(rx, ry) + 9} transform={`${place(s)} rotate(${((i * 37) % 30) - 15} ${x} ${y})`} vectorEffect="non-scaling-stroke" />
      ))}
      {rocks.map(([s, x, y, r], i) => (
        <circle key={i} cx={x} cy={y} r={r} transform={place(s)} vectorEffect="non-scaling-stroke" />
      ))}
    </g>
    {labels.map(([text, s, x, y, kind, dot], i) => {
      const k = kinds[kind];
      const [px, py] = toMap(s, x, y);
      return (
        <g key={i}>
          {dot !== undefined && (
            <circle cx={px} cy={toMap(s, x, y + dot)[1]} r="1.5" fill="#fff" stroke="#777" strokeWidth="0.7" />
          )}
          <text x={px} y={py + 3} textAnchor="middle" fontSize={k.size} fontStyle={k.italic ? "italic" : "normal"}
            fill={k.fill} stroke={kind === "sea" || kind === "gulf" ? "none" : "#fff"} strokeOpacity="0.6" strokeWidth="1.5" paintOrder="stroke">
            {text}
          </text>
        </g>
      );
    })}
  </MapSvg>
);

const ClockIcon = () => (
  <svg width="12" height="12" viewBox="0 0 12 12" aria-hidden="true">
    <circle cx="6" cy="6" r="4.3" fill="#f5f5f5" stroke="#6d6d6d" strokeWidth="1.2" />
    <path d="M6 3.2V6.3H8.3" fill="none" stroke="#8a5560" strokeWidth="1" />
  </svg>
);

const PeopleIcon = () => (
  <svg width="10" height="12" viewBox="0 0 10 12" aria-hidden="true" fill="#4b2e5c">
    <rect x="1" y="3" width="3.6" height="4" rx="1.4" />
    <rect x="5.4" y="3" width="3.6" height="4" rx="1.4" />
    <path d="M0 10.2V9Q0 7.6 1.4 7.4L2.2 6.6H3.4L4.2 7.4L5 7.8L5.8 7.4L6.6 6.6H7.8L8.6 7.4Q10 7.6 10 9V10.2Z" />
  </svg>
);

const PlusIcon = () => (
  <svg width="9" height="9" viewBox="0 0 9 9" aria-hidden="true">
    <path d="M4.5 0.5V8.5M0.5 4.5H8.5" stroke="#fff" strokeWidth="1.7" />
  </svg>
);

const ChevronIcon = () => (
  <svg width="10" height="6" viewBox="0 0 10 6" aria-hidden="true">
    <path d="M1 1L5 4.8L9 1" fill="none" stroke="#000" strokeWidth="2" />
  </svg>
);

const details = [
  ["Başvuru", "125/200"],
  ["Kalan Bütçe", "₺450,000"],
  ["Son Başvuru", "15.05.2024"],
];

export default function App() {
  return (
    <>
      <GlobalStyle />
      <Page>
        <Card>
          <CardHeader $height={49} $gap={0} $align="flex-start">
            <CardTitle $top={5}>Üretici Dağılım Haritası</CardTitle>
            <Controls>
              <FilterSelect $width={158} aria-label="Bölge"><option>Türkiye</option></FilterSelect>
              <FilterSelect $width={91} aria-label="Ürün"><option>Tüm Ürünler</option></FilterSelect>
            </Controls>
          </CardHeader>
          <MapFrame>
            <TerrainMap />
            <ZoomControls>
              <ZoomButton aria-label="Yakınlaştır">+</ZoomButton>
              <ZoomButton aria-label="Uzaklaştır">−</ZoomButton>
            </ZoomControls>
            <Attribution>
              © <a href="https://www.openstreetmap.org/copyright">OpenStreetMap</a> contributors.
            </Attribution>
          </MapFrame>
        </Card>

        <Card>
          <CardHeader $height={29} $gap={13} $align="flex-end">
            <CardTitle>Yaklaşan Etkinlikler</CardTitle>
            <ActionButton $width={89}>+ Etkinlik Ekle</ActionButton>
          </CardHeader>
          <EventItem>
            <DateBox dateTime="2024-04-15">
              <Day>15</Day>
              <Month>NİS</Month>
            </DateBox>
            <div>
              <EventTitle>Organik Tarım Eğitimi</EventTitle>
              <EventPlace>Büyükçekmece Üretici Merkezi</EventPlace>
              <EventMeta>
                <MetaEntry><ClockIcon />14:00</MetaEntry>
                <MetaEntry><PeopleIcon />45 Katılımcı</MetaEntry>
              </EventMeta>
            </div>
          </EventItem>
        </Card>

        <Card>
          <CardHeader $height={28} $gap={14} $align="center">
            <CardTitle>Aktif Destek Programları</CardTitle>
            <Controls>
              <ProgramPicker>
                <ProgramSelect aria-label="Program"><option>Tüm Programlar</option></ProgramSelect>
                <ChevronIcon />
              </ProgramPicker>
              <ActionButton $width={115}><PlusIcon />Yeni Program Ekle</ActionButton>
            </Controls>
          </CardHeader>
          <Program>
            <ProgramHeader>
              <ProgramTitle>Sera Modernizasyon Desteği</ProgramTitle>
              <Badge>Aktif</Badge>
            </ProgramHeader>
            <dl>
              {details.map(([name, value]) => (
                <DetailRow key={name}>
                  <dt>{name}</dt>
                  <dd>{value}</dd>
                </DetailRow>
              ))}
            </dl>
          </Program>
        </Card>
      </Page>
    </>
  );
}
